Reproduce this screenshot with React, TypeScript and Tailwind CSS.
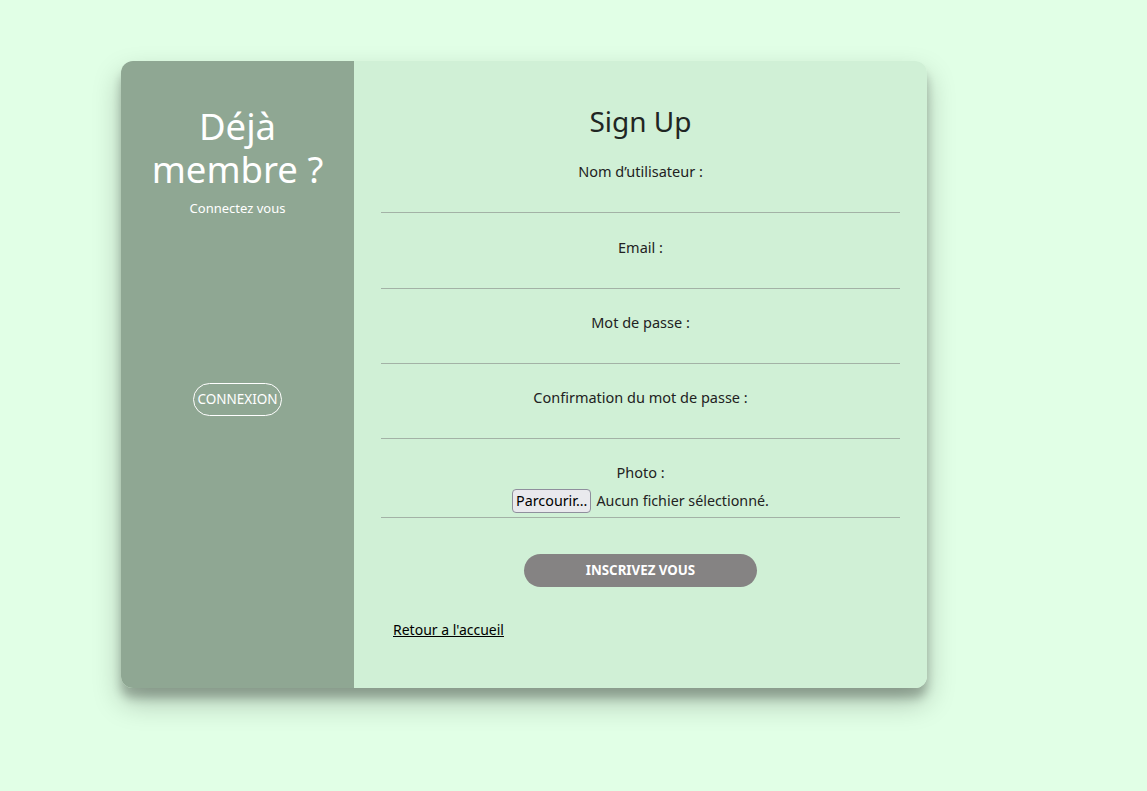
import React from "react";

const FIELDS = [
  { label: "Nom d\u2019utilisateur :", type: "text" },
  { label: "Email :", type: "email" },
  { label: "Mot de passe :", type: "password" },
  { label: "Confirmation du mot de passe :", type: "password" },
];

export default function App() {
  return (
    <div
      className="min-h-[791px] w-full bg-[#e1ffe6] pt-[61px] pl-[121px]"
      style={{ fontFamily: '"Noto Sans", "Open Sans", sans-serif' }}
    >
      <div className="flex w-[806px] h-[627px] rounded-[12px] overflow-hidden shadow-[0_14px_28px_rgba(0,0,0,0.25),0_10px_10px_rgba(0,0,0,0.22)]">
        {/* Left panel */}
        <div className="w-[233px] shrink-0 bg-[#8fa793] flex flex-col items-center text-center text-white pt-[44px]">
          <h1 className="text-[36.5px] leading-[43px] font-normal">
            Déjà
            <br />
            membre ?
          </h1>
          <p className="text-[13px] leading-[18px] mt-[8px]">Connectez vous</p>
          <button className="mt-[166px] h-[33px] w-[89px] rounded-full border border-white text-[13.5px] text-white">
            CONNEXION
          </button>
        </div>

        {/* Right panel */}
        <div className="flex-1 bg-[#d0f0d6] px-[27px] pt-[42px] flex flex-col">
          <h2 className="text-center text-[28px] leading-[36px] text-[#1f2623]">Sign Up</h2>
          <form className="mt-[22px] flex flex-col">
            {FIELDS.map((f, i) => (
              <div key={f.label} className={`flex flex-col ${i === 0 ? "mb-[24px]" : "mb-[23px]"}`}>
                <label className="text-center text-[14.5px] leading-[20px] text-[#222]">{f.label}</label>
                <input
                  type={f.type}
                  className="h-[32px] bg-transparent border-b border-[#a3b2a6] outline-none"
                />
              </div>
            ))}
            <div className="flex flex-col">
              <label className="text-center text-[14.5px] leading-[20px] text-[#222]">Photo :</label>
              <div className="h-[36px] border-b border-[#a3b2a6] flex items-center justify-center gap-[5px] pt-[3px]">
                <span className="h-[24px] px-[3px] flex items-center bg-[#e9e9ed] border border-[#8f8f9d] rounded-[4px] text-[14.3px] text-black">
                  Parcourir...
                </span>
                <span className="text-[14.3px] text-[#222]">Aucun fichier sélectionné.</span>
              </div>
            </div>
            <div className="flex justify-center mt-[36px]">
              <button
                type="button"
                className="w-[233px] h-[33px] rounded-full bg-[#858383] text-white text-[13.3px] font-bold"
              >
                INSCRIVEZ VOUS
              </button>
            </div>
            <a href="#" className="mt-[33px] ml-[12px] text-[14px] leading-[20px] text-black underline self-start">
              Retour a l'accueil
            </a>
          </form>
        </div>
      </div>
    </div>
  );
}
